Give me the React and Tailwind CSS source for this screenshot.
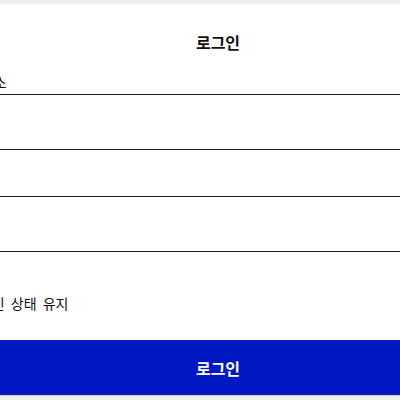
import { useState } from 'react';

function Field({ label, type, height }) {
  return (
    <label className={`flex items-end border-b border-[#1c1c1c] pb-[2px] ${height}`}>
      <span className="shrink-0 text-sm leading-5 text-[#111]">{label}</span>
      <input type={type} className="ml-3 w-full bg-transparent text-sm outline-none" />
    </label>
  );
}

export default function App() {
  const [keep, setKeep] = useState(false);

  return (
    <div className="h-[400px] w-[400px] overflow-hidden bg-[#eeeff1] pt-1 font-['Noto_Sans_CJK_KR',sans-serif]">
      <div className="ml-[-61px] w-[558px] bg-white shadow-[0_1px_1px_rgba(0,0,0,0.12)]">
        <h1 className="pt-[26px] text-center text-base font-bold leading-6 text-[#111]">로그인</h1>

        <div className="mt-4 flex flex-col">
          <Field label="이메일 주소" type="email" height="h-[25px]" />
          <Field label="" type="password" height="h-[55px]" />
          <Field label="" type="text" height="h-[47px]" />
          <Field label="" type="text" height="h-[55px]" />
        </div>

        <label className="mt-[41px] flex h-5 items-center text-sm leading-5 text-[#111] [word-spacing:3px]">
          <input
            type="checkbox"
            checked={keep}
            onChange={(e) => setKeep(e.target.checked)}
            className="mr-[11px] h-4 w-4"
          />
          로그인 상태 유지
        </label>

        <button className="mt-[27px] flex h-[55px] w-full items-center justify-center bg-[#0119c2] text-base font-bold text-white">
          로그인
        </button>
      </div>
    </div>
  );
}
